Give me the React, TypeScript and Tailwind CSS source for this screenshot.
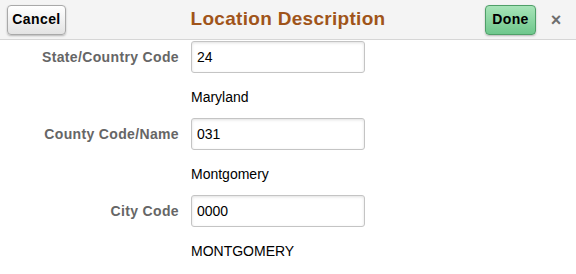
import React from "react";

const fields = [
  { label: "State/Country Code", value: "24", desc: "Maryland" },
  { label: "County Code/Name", value: "031", desc: "Montgomery" },
  { label: "City Code", value: "0000", desc: "MONTGOMERY" },
];

export default function App() {
  return (
    <div className="w-[576px] h-[274px] bg-white font-['Liberation_Sans',Arial,sans-serif] overflow-hidden">
      <div className="h-[40px] bg-[#f4f4f4] border-b border-[#d6d6d6] grid grid-cols-[1fr_auto_1fr] items-center">
        <div className="pl-[7px]">
          <button className="h-[30px] w-[59px] rounded-[4px] border border-[#a9a9a9] bg-gradient-to-b from-white to-[#e3e3e3] shadow-[0_1px_2px_rgba(0,0,0,0.25)] text-[14px] tracking-[0.4px] font-bold text-black">
            Cancel
          </button>
        </div>
        <div className="text-[19px] tracking-[0.3px] font-bold text-[#a0541a] pb-[1px]">Location Description</div>
        <div className="flex items-center justify-end">
          <button className="h-[30px] w-[51px] rounded-[4px] border border-[#4f9f68] bg-gradient-to-b from-[#a7e4b8] to-[#6ec78c] shadow-[0_1px_2px_rgba(0,0,0,0.25)] text-[14px] tracking-[0.4px] font-bold text-black">
            Done
          </button>
          <span className="w-[40px] text-center text-[18px] text-[#6e6e6e] font-bold leading-none">×</span>
        </div>
      </div>
      <div className="pt-[1px]">
        {fields.map((f) => (
          <div key={f.label} className="grid grid-cols-[179px_174px] gap-x-[12px] h-[77px]">
            <div className="h-[32px] flex items-center justify-end text-[14px] tracking-[0.35px] font-bold text-[#666]">
              {f.label}
            </div>
            <div>
              <input
                readOnly
                value={f.value}
                className="block w-[174px] h-[32px] px-[5px] rounded-[3px] border border-[#c4c4c4] shadow-[inset_0_1px_3px_rgba(0,0,0,0.12)] text-[14px] text-black outline-none"
              />
              <div className="mt-[16px] text-[14px] text-black leading-[16px]">{f.desc}</div>
            </div>
          </div>
        ))}
      </div>
    </div>
  );
}
